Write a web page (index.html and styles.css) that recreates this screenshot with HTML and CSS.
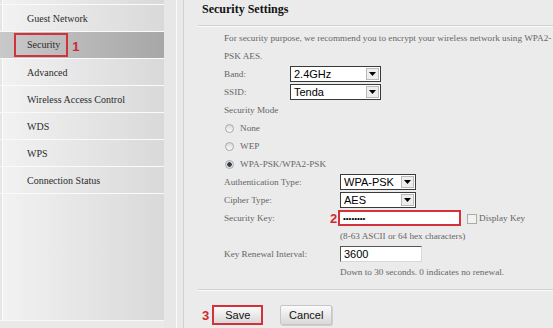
FILE: index.html
```html
<!DOCTYPE html>
<html lang="en">
<head>
    <meta charset="UTF-8">
    <meta name="viewport" content="width=device-width, initial-scale=1.0">
    <title>Security Settings</title>
    <link rel="stylesheet" href="styles.css">
</head>
<body>

    <div class="page">
        <!-- Left menu -->
        <nav class="sidebar">
            <ul class="menu">
                <li>Guest Network</li>
                <li class="active"><span class="mark">Security</span><span class="num">1</span></li>
                <li>Advanced</li>
                <li>Wireless Access Control</li>
                <li>WDS</li>
                <li>WPS</li>
                <li>Connection Status</li>
            </ul>
        </nav>
        <div class="gutter"></div>

        <main class="content">
            <div class="content-head">
                <h2>Security Settings</h2>
            </div>

            <form id="security-form">
                <div class="fields">
                    <p class="intro">For security purpose, we recommend you to encrypt your wireless network using WPA2-<br>PSK AES.</p>

                    <div class="row">
                        <span class="label short">Band:</span>
                        <div class="select band">
                            <select name="band"><option>2.4GHz</option></select>
                            <span class="arrow"><svg width="7" height="4" viewBox="0 0 7 4"><path d="M0 0h7L3.5 4z" fill="#000"/></svg></span>
                        </div>
                    </div>
                    <div class="row">
                        <span class="label short">SSID:</span>
                        <div class="select band">
                            <select name="ssid"><option>Tenda</option></select>
                            <span class="arrow"><svg width="7" height="4" viewBox="0 0 7 4"><path d="M0 0h7L3.5 4z" fill="#000"/></svg></span>
                        </div>
                    </div>

                    <div class="row">Security Mode</div>
                    <label class="row radio"><input type="radio" name="mode"> None</label>
                    <label class="row radio"><input type="radio" name="mode"> WEP</label>
                    <label class="row radio"><input type="radio" name="mode" checked> WPA-PSK/WPA2-PSK</label>

                    <div class="row">
                        <span class="label">Authentication Type:</span>
                        <div class="select auth">
                            <select name="auth"><option>WPA-PSK</option></select>
                            <span class="arrow"><svg width="7" height="4" viewBox="0 0 7 4"><path d="M0 0h7L3.5 4z" fill="#000"/></svg></span>
                        </div>
                    </div>
                    <div class="row">
                        <span class="label">Cipher Type:</span>
                        <div class="select auth">
                            <select name="cipher"><option>AES</option></select>
                            <span class="arrow"><svg width="7" height="4" viewBox="0 0 7 4"><path d="M0 0h7L3.5 4z" fill="#000"/></svg></span>
                        </div>
                    </div>
                    <div class="row">
                        <span class="label key-label">Security Key:</span>
                        <span class="num key-num">2</span>
                        <input class="key" type="password" name="key" value="12345678">
                        <label class="display-key"><input class="check" type="checkbox"> Display Key</label>
                    </div>
                    <div class="row hint">(8-63 ASCII or 64 hex characters)</div>
                    <div class="row">
                        <span class="label">Key Renewal Interval:</span>
                        <input class="text" type="text" name="interval" value="3600">
                    </div>
                    <div class="row hint">Down to 30 seconds. 0 indicates no renewal.</div>
                </div>

                <div class="divider"></div>

                <div class="actions">
                    <span class="num">3</span>
                    <button class="btn marked" type="submit">Save</button>
                    <button class="btn cancel" type="button">Cancel</button>
                </div>
            </form>
        </main>
    </div>

</body>
</html>
```

FILE: styles.css
```css
body {
    margin: 0;
    background-color: #e9e9e9;
    font-family: "Liberation Serif", "Times New Roman", serif;
    font-size: 10px;
    color: #333;
}
.page {
    display: flex;
    height: 328px;
    overflow: hidden;
}

/* Left menu */
.sidebar {
    width: 164px;
    height: 321px;
    flex: none;
    box-sizing: border-box;
    padding-top: 4px;
    background: linear-gradient(to right, #f2f2f2, #d9d9d9);
    box-shadow: inset 2px 0 0 #e6e6e6, inset 3px 0 0 #fbfbfb;
    border-bottom: 1px solid #f7f7f7;
}
.menu {
    list-style: none;
    margin: 0;
    padding: 0;
    border-top: 1px solid #fafafa;
}
.menu li {
    display: flex;
    align-items: center;
    height: 26px;
    padding-left: 27px;
    border-bottom: 1px solid #fafafa;
    color: #2b2b2b;
}
.menu li.active {
    padding-left: 14px;
    background: linear-gradient(to right, #c9c9c9, #a7a7a7);
}
.mark {
    box-sizing: border-box;
    height: 24px;
    line-height: 20px;
    padding: 0 6px 0 11px;
    border: 2px solid #d4323b;
}
.num {
    font-family: "Liberation Sans", Arial, sans-serif;
    font-weight: bold;
    font-size: 13px;
    color: #cf2a33;
}
.menu .num {
    margin-left: 4px;
    margin-top: 2px;
}
.gutter {
    width: 20px;
    flex: none;
    background-color: #e7e7e7;
    border-right: 1px solid #d2d2d2;
    box-shadow: inset -6px 0 0 #e9e9e9, inset -7px 0 0 #f9f9f9;
    box-sizing: border-box;
}

/* Main panel */
.content {
    flex: 1;
    min-width: 0;
    padding-left: 14px;
    background-color: #ebebeb;
}
.content-head {
    height: 25px;
    border-bottom: 1px solid #d0d0d0;
    box-shadow: 0 1px 0 #fafafa;
}
.content-head h2 {
    margin: 0 0 0 4px;
    font-size: 12px;
    line-height: 18px;
    color: #111;
}
.fields {
    padding: 3px 0 0 26px;
    font-size: 9.2px;
    color: #666;
}
.intro {
    margin: 0;
    line-height: 18px;
    white-space: nowrap;
}
.row {
    display: flex;
    align-items: center;
    height: 18px;
    white-space: nowrap;
}
.label {
    width: 116px;
    flex: none;
}
.label.short {
    width: 66px;
}
.select {
    display: flex;
    box-sizing: border-box;
    height: 16px;
    border: 1px solid #3a3a3a;
    background-color: #fff;
    font-family: "Liberation Sans", Arial, sans-serif;
    font-size: 11px;
    color: #000;
}
.select.band {
    width: 91px;
}
.select.auth {
    width: 76px;
}
.select select {
    appearance: none;
    -webkit-appearance: none;
    flex: 1;
    min-width: 0;
    border: 0;
    padding: 0 0 0 3px;
    background: transparent;
    font: inherit;
    color: inherit;
    outline: none;
}
.select .arrow {
    width: 11px;
    flex: none;
    margin: 1px;
    display: flex;
    align-items: center;
    justify-content: center;
    border: 1px solid #b9b9b9;
    background-color: #ededed;
}

/* Radios and checkbox */
.radio input {
    appearance: none;
    -webkit-appearance: none;
    box-sizing: border-box;
    width: 9px;
    height: 9px;
    margin: 0 6px 0 1px;
    border: 1px solid #a9a9a9;
    border-radius: 50%;
    background: linear-gradient(#d9d9d9, #fbfbfb);
}
.radio input:checked {
    background: radial-gradient(circle, #2f3d4c 0 2px, #e4e4e4 2.5px);
}
.key-label {
    width: 106px;
}
.key-num {
    width: 8px;
    flex: none;
}
.key {
    box-sizing: border-box;
    width: 123px;
    height: 16px;
    margin: 0;
    padding: 0 3px;
    border: 2px solid #d4323b;
    background-color: #fff;
    font-family: "Liberation Sans", Arial, sans-serif;
    font-size: 8px;
    outline: none;
}
.display-key {
    display: flex;
    align-items: center;
    margin-left: 6px;
}
.check {
    appearance: none;
    -webkit-appearance: none;
    box-sizing: border-box;
    width: 10px;
    height: 10px;
    margin: 2px 2px 0 0;
    border: 1px solid #acacac;
    background-color: #f1f1f1;
}
.hint {
    padding-left: 116px;
}
.text {
    box-sizing: border-box;
    width: 82px;
    height: 16px;
    margin: 0;
    padding: 0 3px;
    border: 1px solid;
    border-color: #555 #d8d8d8 #d8d8d8 #555;
    background-color: #fff;
    font-family: "Liberation Sans", Arial, sans-serif;
    font-size: 11px;
    color: #000;
    outline: none;
}

/* Buttons */
.divider {
    margin-top: 8px;
    border-top: 1px solid #d0d0d0;
    box-shadow: 0 1px 0 #fafafa;
}
.actions {
    display: flex;
    align-items: center;
    height: 20px;
    margin-top: 15px;
    padding-left: 4px;
}
.actions .num {
    margin-right: 3px;
}
.btn {
    box-sizing: border-box;
    height: 20px;
    padding: 0;
    border: 1px solid #c6c6c6;
    border-radius: 2px;
    background: linear-gradient(#fbfbfb, #d9d9d9);
    font-family: "Liberation Sans", Arial, sans-serif;
    font-size: 11px;
    color: #111;
    cursor: pointer;
}
.btn.marked {
    width: 51px;
    border: 2px solid #d4323b;
    border-radius: 0;
}
.btn.cancel {
    width: 52px;
    margin-left: 17px;
    box-shadow: 1px 1px 0 #cfcfcf;
}
```
